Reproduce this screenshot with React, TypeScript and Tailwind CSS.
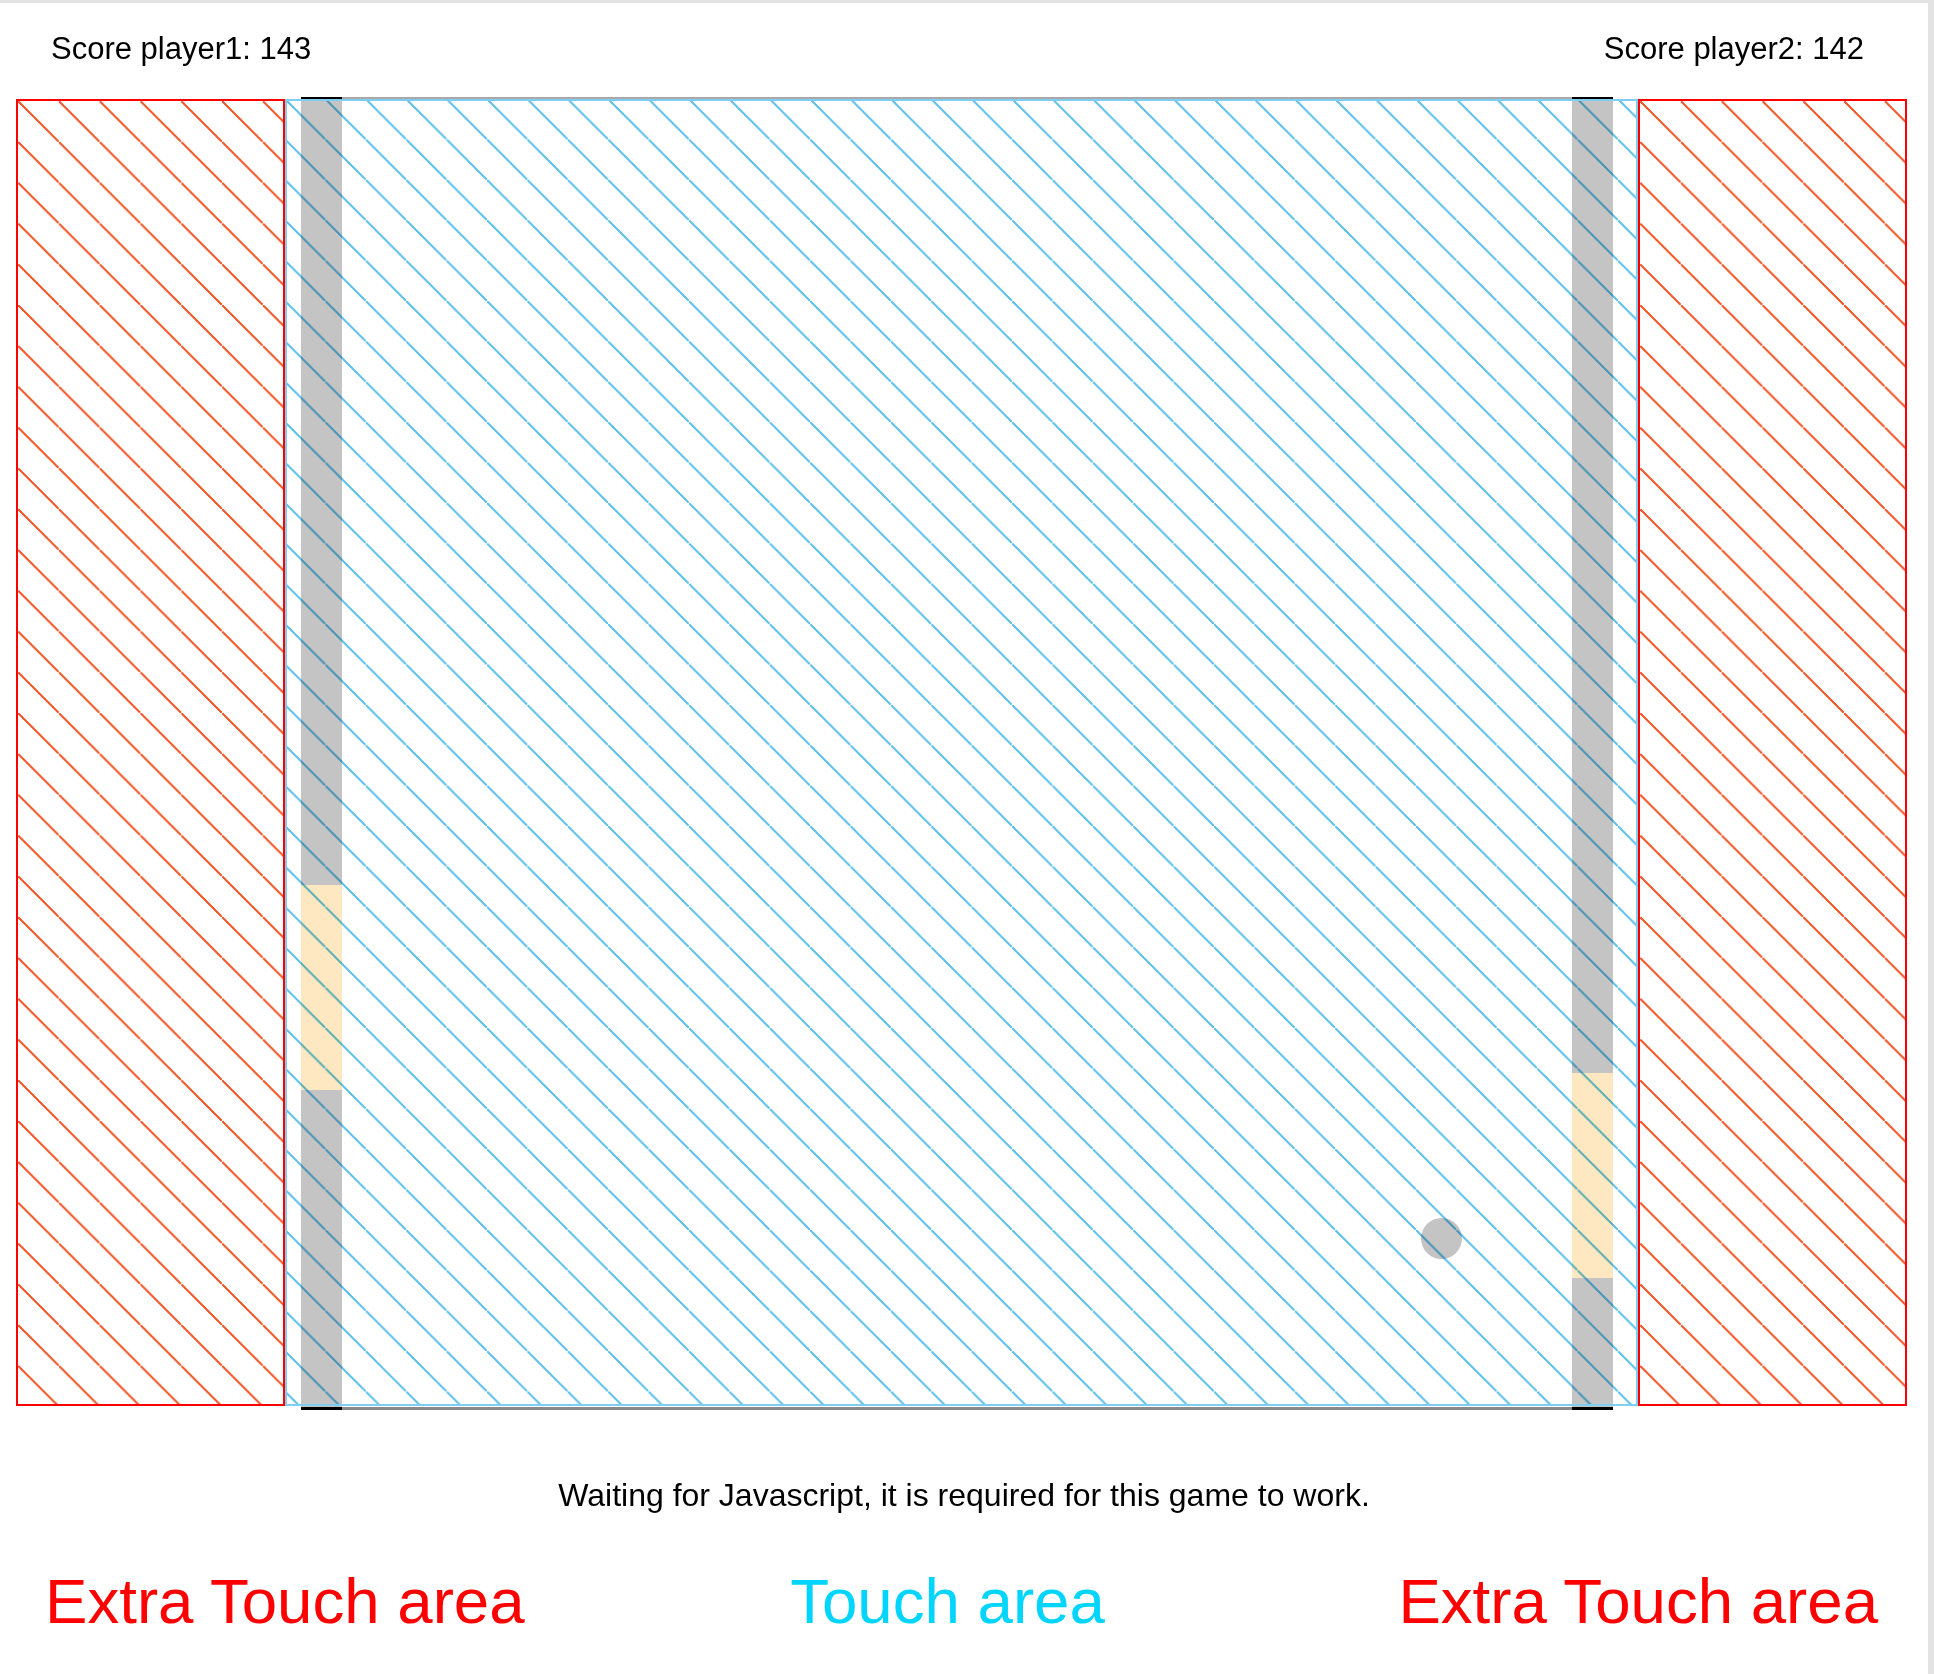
import React from 'react';

// Hatch patterns for the touch zones (one diagonal per square tile)
const RED_HATCH =
  'bg-[image:linear-gradient(45deg,transparent_48.7%,#f35c2e_48.7%,#f35c2e_51.3%,transparent_51.3%)] bg-[size:40.8px_40.8px]';
const BLUE_HATCH =
  'bg-[image:linear-gradient(45deg,transparent_48.7%,#62c2ed_48.7%,#62c2ed_51.3%,transparent_51.3%)] bg-[size:40.4px_40.4px]';

const ExtraTouchArea: React.FC = () => (
  <div className={`w-[269px] h-[1307px] border-2 border-[#ff0000] bg-white ${RED_HATCH}`} />
);

// One paddle track: gray column with a yellow paddle segment
const Paddle: React.FC<{ before: number; after: number }> = ({ before, after }) => (
  <div className="w-[41px] h-full flex flex-col">
    <div className="h-[2px] bg-black" />
    <div className="bg-[#c4c4c4]" style={{ height: before }} />
    <div className="h-[205px] bg-[#fde8c2]" />
    <div className="bg-[#c4c4c4]" style={{ height: after }} />
    <div className="h-[3px] bg-black" />
  </div>
);

const App: React.FC = () => {
  return (
    <div
      className="w-full min-h-screen bg-white border-t-[3px] border-r-[6px] border-[#e3e3e3] text-black"
      style={{ fontFamily: '"Liberation Sans", Arial, Helvetica, sans-serif' }}
    >
      {/* Scores */}
      <div className="flex items-center justify-between pt-[30px] pl-[51px] pr-[64px]">
        <span className="text-[31px] leading-[32px]">Score player1: 143</span>
        <span className="text-[31px] leading-[32px]">Score player2: 142</span>
      </div>

      {/* Play field */}
      <div className="flex mt-[34px] pl-[16px]">
        <ExtraTouchArea />

        <div className="relative w-[1353px] h-[1307px] bg-white">
          {/* Game canvas */}
          <div className="absolute left-[16px] -top-[2px] w-[1312px] h-[1313px] flex">
            <Paddle before={786} after={317} />
            <div className="flex-1 border-t-2 border-t-[#a9a9a9] border-b-[3px] border-b-[#8a8a8a]" />
            <Paddle before={974} after={129} />
            {/* Ball */}
            <div className="absolute left-[1120px] top-[1121px] w-[41px] h-[41px] rounded-full bg-[#c4c4c4] blur-[0.6px]" />
          </div>
          {/* Touch area hatch + outline */}
          <div className={`absolute inset-0 mix-blend-multiply pointer-events-none ${BLUE_HATCH}`} />
          <div className="absolute inset-0 border-2 border-[#80cdf2] pointer-events-none" />
        </div>

        <ExtraTouchArea />
      </div>

      {/* Status */}
      <p className="mt-[73px] text-center text-[32px] leading-[32px]">
        Waiting for Javascript, it is required for this game to work.
      </p>

      {/* Legend */}
      <div className="flex items-center justify-between mt-[58px] pl-[45px] pr-[50px]">
        <span className="text-[63.6px] leading-[64px] text-[#ff0000]">Extra Touch area</span>
        <span className="text-[63.6px] leading-[64px] text-[#00d5ff] mr-[28px]">Touch area</span>
        <span className="text-[63.6px] leading-[64px] text-[#ff0000]">Extra Touch area</span>
      </div>
    </div>
  );
};

export default App;
